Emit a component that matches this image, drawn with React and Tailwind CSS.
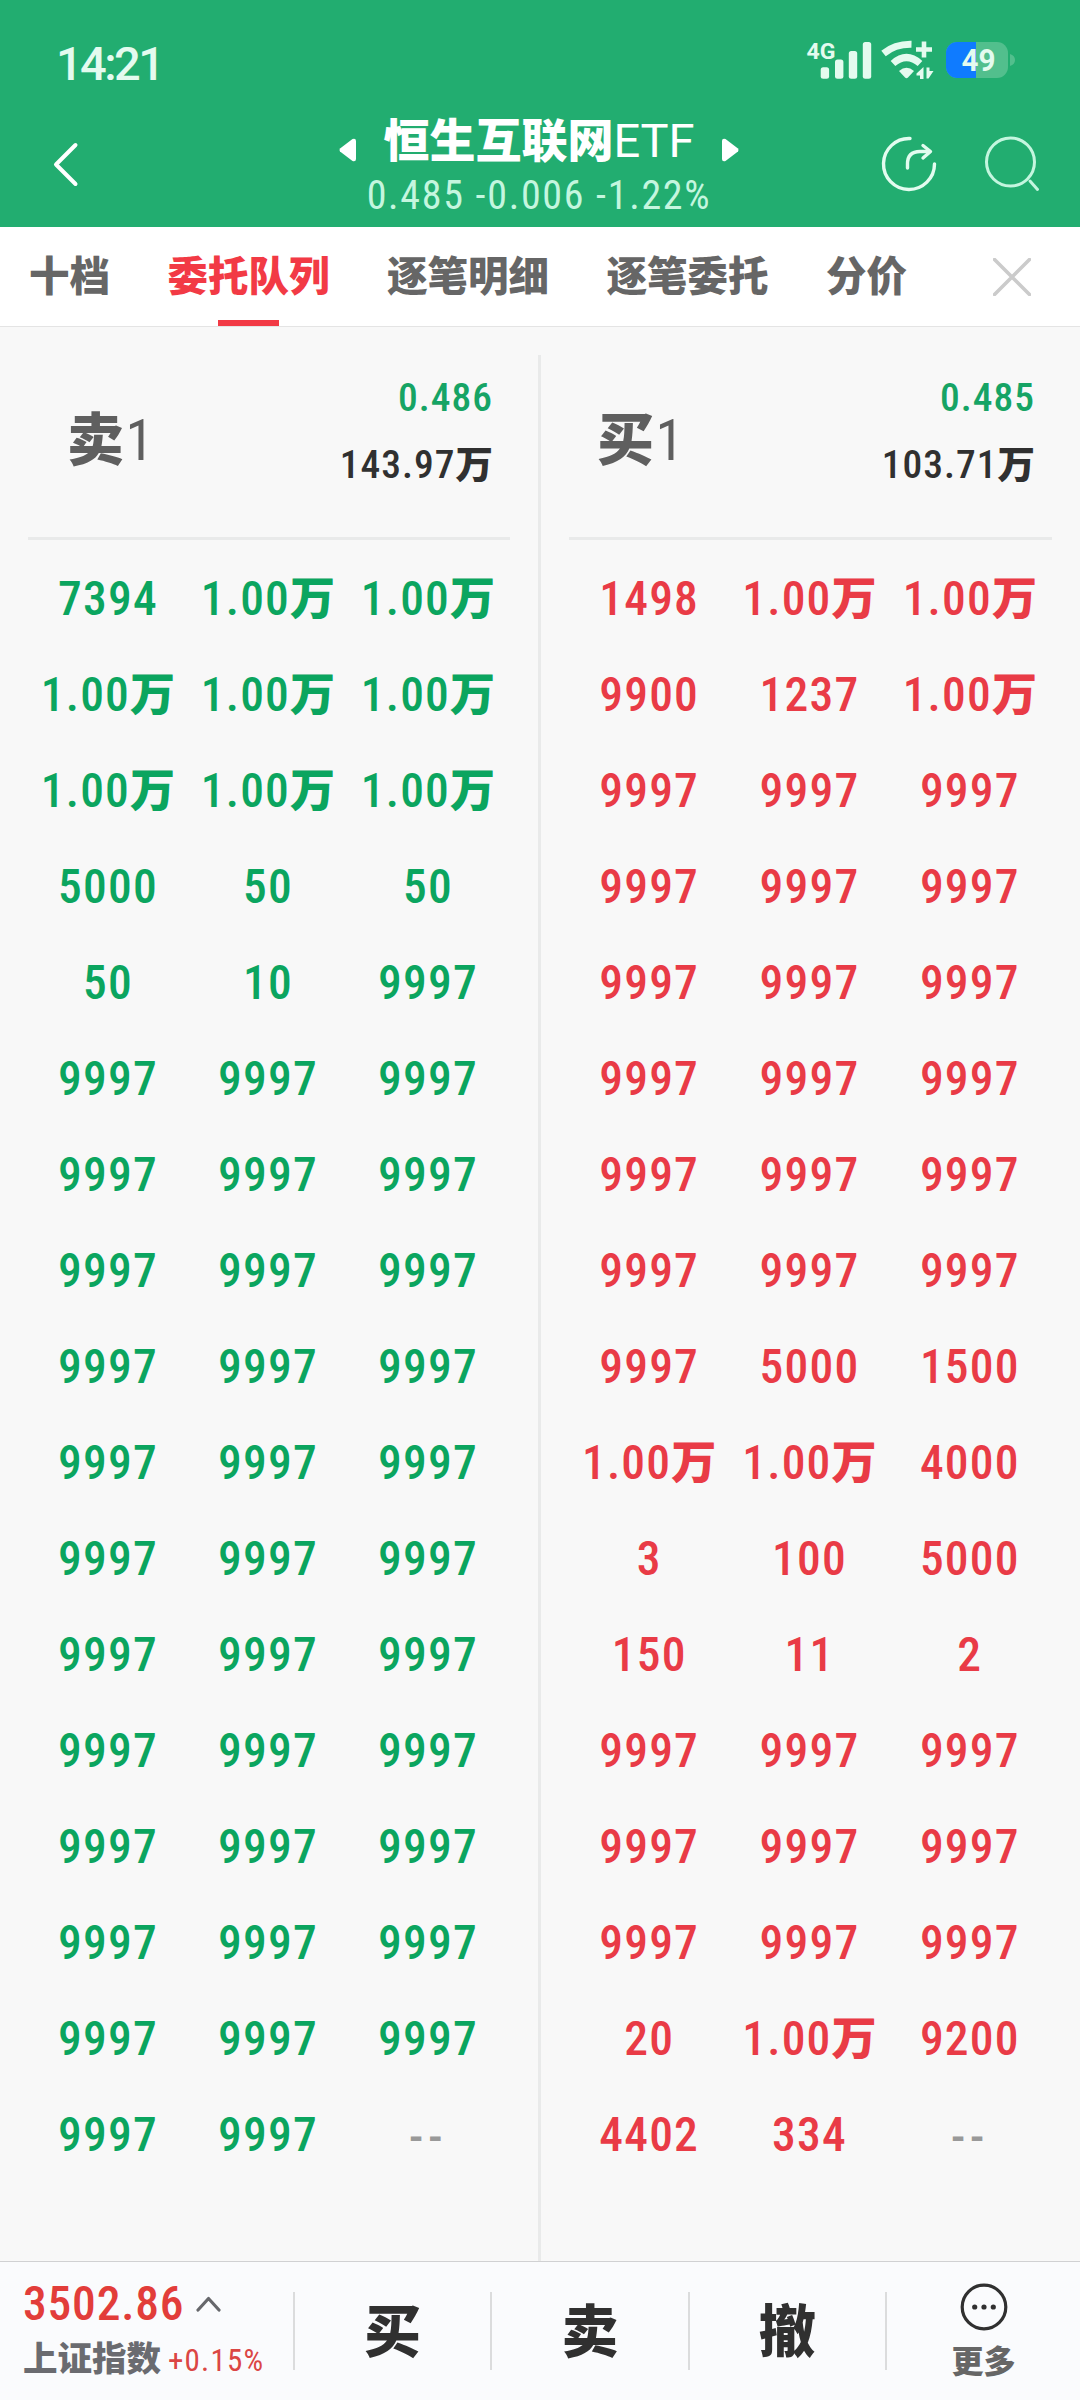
import React, { useState } from 'react';

const TABS = ['十档', '委托队列', '逐笔明细', '逐笔委托', '分价'];

const W = '1.00万';
const N = '9997';

const SELL_QUEUE = [
  ['7394', W, W],
  [W, W, W],
  [W, W, W],
  ['5000', '50', '50'],
  ['50', '10', N],
  [N, N, N],
  [N, N, N],
  [N, N, N],
  [N, N, N],
  [N, N, N],
  [N, N, N],
  [N, N, N],
  [N, N, N],
  [N, N, N],
  [N, N, N],
  [N, N, N],
  [N, N, '--'],
];

const BUY_QUEUE = [
  ['1498', W, W],
  ['9900', '1237', W],
  [N, N, N],
  [N, N, N],
  [N, N, N],
  [N, N, N],
  [N, N, N],
  [N, N, N],
  [N, '5000', '1500'],
  [W, W, '4000'],
  ['3', '100', '5000'],
  ['150', '11', '2'],
  [N, N, N],
  [N, N, N],
  [N, N, N],
  ['20', W, '9200'],
  ['4402', '334', '--'],
];

// Digits stay medium, the 万 unit is heavy and a touch smaller
function Amount({ value }) {
  const hasUnit = value.endsWith('万');
  return (
    <>
      {hasUnit ? value.slice(0, -1) : value}
      {hasUnit && <span className="font-black text-[0.95em] tracking-normal">万</span>}
    </>
  );
}

function StatusBar() {
  return (
    <div className="h-[84px] flex justify-between pl-[56px] pr-[64px] pt-[36px]">
      <span className="text-[47px] leading-[56px] font-medium tracking-[-2.6px] text-[#e4fbef]">14:21</span>
      <svg width="210" height="46" viewBox="806 40 210 46" fill="#e4fbef">
        <text x="806.5" y="62.5" fontSize="22" fontWeight="700" textLength="29" lengthAdjust="spacingAndGlyphs">4G</text>
        <rect x="820.7" y="71.3" width="8.4" height="11.4" rx="2.5" />
        <rect x="835" y="63.6" width="8.4" height="19.1" rx="2.5" />
        <rect x="848.8" y="55" width="8.4" height="27.7" rx="2.5" />
        <rect x="862.8" y="46" width="8.4" height="36.7" rx="2.5" />
        <g fill="none" stroke="#e4fbef" strokeWidth="7">
          <path d="M883.5 57.5Q895 48 911.5 48.3" />
          <path d="M893 67.5Q906.5 55.5 920 67.5" />
        </g>
        <path d="M899 75q7.5-6.5 15 0l-6 6.500q-1.500 1.500-3 0z" />
        <path d="M916 53.500h16M924 45.500v16" stroke="#e4fbef" strokeWidth="4.600" />
        <path d="M923.500 71v12h-3.500v-3.500h-3.500v-2z M926.500 71.500h3v3.500h4l-5 7.500h-2z" />
        <clipPath id="battery">
          <rect x="946" y="46" width="62" height="36" rx="11" />
        </clipPath>
        <g clipPath="url(#battery)">
          <rect x="946" y="46" width="62" height="36" fill="#52bf8d" />
          <rect x="946" y="46" width="30" height="36" fill="#0f7bff" />
        </g>
        <path d="M1010 58q5 1.500 5 6t-5 6z" fill="#52bf8d" />
        <text x="961.5" y="75" fontSize="30.500" fontWeight="700" textLength="34" lengthAdjust="spacingAndGlyphs">49</text>
      </svg>
    </div>
  );
}

function Header() {
  return (
    <header className="h-[227px] bg-[#22ad70] text-white">
      <StatusBar />
      <div className="h-[143px] flex items-start justify-between pl-[52px] pr-[38px]">
        <svg className="mt-[57px]" width="30" height="48" viewBox="52 141 30 48" fill="none" stroke="currentColor" strokeWidth="4" strokeLinecap="round" strokeLinejoin="round">
          <path d="M75.500 145L56 164.500L75.500 184" />
        </svg>
        <div className="w-[400px] ml-[116px] mt-[28px] flex flex-col items-center">
          <div className="w-full flex items-center justify-between h-[58px]">
            <svg className="mt-[18px]" width="17" height="24" viewBox="0 0 17 24" fill="currentColor">
              <path d="M13.500 1Q17 0 17 3V21Q17 24 13.500 23L1 13.500Q0 12 1 10.500Z" />
            </svg>
            <h1 className="text-[46px] leading-[58px] font-black whitespace-nowrap">
              恒生互联网<span className="font-normal text-[47px]">ETF</span>
            </h1>
            <svg className="mt-[18px]" width="17" height="24" viewBox="0 0 17 24" fill="currentColor">
              <path d="M3.500 1Q0 0 0 3V21Q0 24 3.500 23L16 13.500Q17 12 16 10.500Z" />
            </svg>
          </div>
          <p className="text-[40px] leading-[52px] [font-stretch:75%] tracking-[1.7px] whitespace-nowrap text-[#c4f6df]">0.485 -0.006 -1.22%</p>
        </div>
        <div className="flex gap-[46px] mt-[51px]">
          <svg width="58" height="58" viewBox="880 135 58 58" fill="none" stroke="#e2fcef" strokeWidth="3.400" strokeLinecap="round" strokeLinejoin="round">
            <path d="M910 138.500A25.500 25.500 0 1 0 934.500 164" />
            <path d="M907.500 168v-4q0-12.500 12.500-12.500h9.500" />
            <path d="M923 145.500l7.500 6l-7.500 6.500" />
          </svg>
          <svg width="58" height="58" viewBox="984 135 58 58" fill="none" stroke="#c4f6df" strokeWidth="3" strokeLinecap="round">
            <circle cx="1010.500" cy="162" r="24" />
            <path d="M1030 181l7.500 8.500" />
          </svg>
        </div>
      </div>
    </header>
  );
}

function Tabs({ active, onChange }) {
  return (
    <nav className="h-[100px] bg-white border-b border-[#e4e4e4] flex items-center justify-between pl-[29px] pr-[49px]">
      <div className="h-full flex gap-[57.5px]">
        {TABS.map(t => (
          <button
            key={t}
            onClick={() => onChange(t)}
            className={`h-full flex flex-col items-center justify-between text-[40.5px] font-black whitespace-nowrap ${t === active ? 'text-[#f23a45]' : 'text-[#666]'}`}
          >
            <span className="leading-[60px] mt-[20px]">{t}</span>
            {t === active && <span className="w-[61px] h-[6px] bg-[#f23a45]" />}
          </button>
        ))}
      </div>
      <svg width="38" height="38" viewBox="0 0 38 38" stroke="#cbcbcb" strokeWidth="3.600" strokeLinecap="round">
        <path d="M1.500 1.500L36.500 36.500M36.500 1.500L1.500 36.500" />
      </svg>
    </nav>
  );
}

function QueuePanel({ side, price, volume, rows, color, width, labelPad }) {
  return (
    <section className={`pt-[10px] ${width}`}>
      <div className="h-[175px] flex justify-between border-b-[3px] border-[#e9eaea] pr-[17px]">
        <div className={`pt-[36px] text-[57px] leading-[80px] [font-stretch:75%] text-[#5f5f5f] ${labelPad}`}>
          <span className="font-black tracking-[1.5px]">{side}</span>1
        </div>
        <div className="pt-[5px] text-right text-[39.5px] font-medium [font-stretch:75%] tracking-[1px]">
          <div className="leading-[56px] text-[#16a465]">{price}</div>
          <div className="mt-[11px] leading-[56px] text-[#303030]"><Amount value={volume} /></div>
        </div>
      </div>
      <div className={`pt-[11px] pr-[2px] ${color}`}>
        {rows.map((row, i) => (
          <div key={i} className="grid grid-cols-3 h-[96px] text-center text-[47.5px] leading-[96px] font-medium [font-stretch:75%] tracking-[1.2px] whitespace-nowrap">
            {row.map((v, j) => (
              v === '--'
                ? <span key={j} className="leading-[100px] tracking-[4.5px] text-[#999]">--</span>
                : <span key={j}><Amount value={v} /></span>
            ))}
          </div>
        ))}
      </div>
    </section>
  );
}

function BottomBar() {
  return (
    <footer className="h-[139px] bg-[#fafbfd] border-t border-[#d0d1d3] flex">
      <div className="w-[293px] pl-[23px] pt-[14px] whitespace-nowrap">
        <div className="flex items-center gap-[12px] h-[56px]">
          <span className="text-[47.5px] leading-[56px] font-medium [font-stretch:75%] tracking-[0.8px] text-[#e23d3a]">3502.86</span>
          <svg width="25" height="16" viewBox="0 0 25 16" fill="none" stroke="#66676b" strokeWidth="3.200" strokeLinecap="round" strokeLinejoin="round">
            <path d="M2 14L12.500 2.500L23 14" />
          </svg>
        </div>
        <div className="flex items-baseline gap-[7px] mt-[3px] leading-[48px]">
          <span className="text-[34.5px] font-black text-[#6a6b70]">上证指数</span>
          <span className="text-[31px] [font-stretch:75%] tracking-[1.2px] text-[#db4644]">+0.15%</span>
        </div>
      </div>
      {['买', '卖', '撤'].map(t => (
        <button key={t} className="w-[197.5px] h-[78px] mt-[30px] border-l-2 border-[#dbdcdd] text-[57px] leading-[82px] font-black text-[#303030]">
          {t}
        </button>
      ))}
      <div className="flex-1 h-[78px] mt-[30px] border-l-2 border-[#dbdcdd]">
        <div className="w-[193px] -mt-[9px] flex flex-col items-center">
          <svg width="48" height="48" viewBox="0 0 48 48" fill="#303030">
            <circle cx="24" cy="24" r="21.800" fill="none" stroke="#303030" strokeWidth="3.200" />
            <circle cx="14.700" cy="24" r="2.600" />
            <circle cx="24" cy="24" r="2.600" />
            <circle cx="33.300" cy="24" r="2.600" />
          </svg>
          <span className="mt-[9px] text-[32px] leading-[44px] font-black text-[#666]">更多</span>
        </div>
      </div>
    </footer>
  );
}

export default function App() {
  const [tab, setTab] = useState('委托队列');

  return (
    <div className="w-[1080px] h-[2400px] flex flex-col bg-[#f8f8f8] font-[Roboto,'Noto_Sans_CJK_SC',sans-serif] overflow-hidden">
      <Header />
      <Tabs active={tab} onChange={setTab} />
      <main className="flex-1 flex justify-between px-7 pt-7">
        <QueuePanel side="卖" price="0.486" volume="143.97万" rows={SELL_QUEUE} color="text-[#0ba55f]" width="w-[482px]" labelPad="pl-[39px]" />
        <div className="w-[3px] bg-[#e9eaea]" />
        <QueuePanel side="买" price="0.485" volume="103.71万" rows={BUY_QUEUE} color="text-[#e93b46]" width="w-[483px]" labelPad="pl-[28px]" />
      </main>
      <BottomBar />
    </div>
  );
}
